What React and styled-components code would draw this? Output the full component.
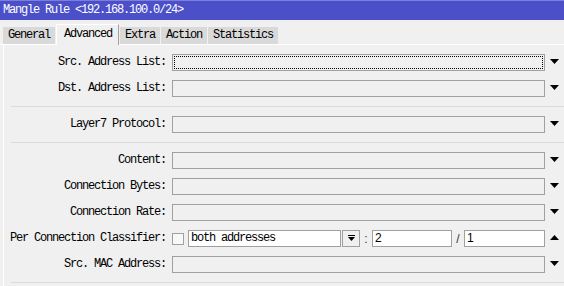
import React from 'react'
import styled, { createGlobalStyle, css } from 'styled-components'

const GlobalStyle = createGlobalStyle`
  html, body {
    margin: 0;
    padding: 0;
    background: #f0f0f0;
    overflow: hidden;
  }
  body {
    font-family: "Liberation Mono", "DejaVu Sans Mono", monospace;
    font-size: 12px;
    letter-spacing: -1.2px;
    color: #000;
  }
`;

const tabs = ['General', 'Advanced', 'Extra', 'Action', 'Statistics'];

function Arrow({ up }) {
  return (
    <svg width="9" height="6" viewBox="0 0 9 6">
      {up
        ? <polygon points="0,5 9,5 4.5,0" fill="#000" />
        : <polygon points="0,0 9,0 4.5,5" fill="#000" />}
    </svg>
  );
}

function FieldRow({ label, focused }) {
  return (
    <Row>
      <Label>{label}</Label>
      <Field focused={focused} />
      <ArrowCell><Arrow /></ArrowCell>
    </Row>
  );
}

export default function App() {
  return (
    <Window>
      <GlobalStyle />
      <TitleBar>Mangle Rule &lt;192.168.100.0/24&gt;</TitleBar>

      <TabStrip>
        {tabs.map(t => (
          <Tab key={t} active={t === 'Advanced'}>{t}</Tab>
        ))}
      </TabStrip>

      <Panel>
        <FieldRow label="Src. Address List:" focused />
        <FieldRow label="Dst. Address List:" />
        <Separator />
        <FieldRow label="Layer7 Protocol:" />
        <Separator />
        <FieldRow label="Content:" />
        <FieldRow label="Connection Bytes:" />
        <FieldRow label="Connection Rate:" />

        <Row>
          <Label>Per Connection Classifier:</Label>
          <Combo>
            <Checkbox />
            <Select>both addresses</Select>
            <DropButton>
              <svg width="9" height="9" viewBox="0 0 9 9">
                <rect x="1" y="1" width="7" height="1" fill="#000" />
                <polygon points="1,3 8,3 4.5,7" fill="#000" />
              </svg>
            </DropButton>
            <Sep>:</Sep>
            <NumInput w={80}>2</NumInput>
            <Sep>/</Sep>
            <NumInput w={81}>1</NumInput>
          </Combo>
          <ArrowCell><Arrow up /></ArrowCell>
        </Row>

        <FieldRow label="Src. MAC Address:" />
        <Separator />
      </Panel>
    </Window>
  );
}

const Window = styled.div`
  width: 564px;
  height: 286px;
  display: flex;
  flex-direction: column;
  background: #f0f0f0;
  overflow: hidden;
`;

const TitleBar = styled.div`
  flex: none;
  height: 20px;
  box-sizing: border-box;
  background: #4b50c9;
  border-top: 1px solid #7b7fd9;
  color: #fff;
  padding-left: 3px;
  line-height: 18px;
  white-space: nowrap;
`;

const TabStrip = styled.div`
  flex: none;
  height: 25px;
  box-sizing: border-box;
  display: flex;
  align-items: flex-end;
  padding-left: 3px;
  border-bottom: 1px solid #fff;
`;

const Tab = styled.div`
  height: 17px;
  line-height: 17px;
  padding: 0 5px;
  margin-right: 1px;
  background: #d9d9d9;
  white-space: nowrap;

  ${p => p.active && css`
    height: 21px;
    line-height: 18px;
    padding: 0 7px;
    margin: 0 1px -1px 0;
    background: #f0f0f0;
    border-top: 1px solid #fff;
    border-left: 1px solid #fff;
    border-right: 1px solid #a0a0a0;
    box-sizing: border-box;
    width: 63px;
  `}
`;

const Panel = styled.div`
  flex: 1;
  margin-left: 3px;
  border-left: 1px solid #fff;
  padding-top: 5px;
  display: flex;
  flex-direction: column;
`;

const Row = styled.div`
  flex: none;
  height: 26px;
  box-sizing: border-box;
  padding-top: 4px;
  display: grid;
  grid-template-columns: 168px 373px 19px;
  align-items: start;
`;

const Label = styled.div`
  text-align: right;
  padding-right: 6px;
  line-height: 17px;
  white-space: nowrap;
`;

const Field = styled.div`
  position: relative;
  height: 17px;
  box-sizing: border-box;
  border: 1px solid #a0a0a0;
  background: #f0f0f0;

  ${p => p.focused && css`
    &::after {
      content: '';
      position: absolute;
      inset: 1px;
      border: 1px dotted #000;
    }
  `}
`;

const ArrowCell = styled.div`
  height: 17px;
  display: flex;
  align-items: center;
  justify-content: center;
  padding-bottom: 1px;
  box-sizing: border-box;
`;

const Separator = styled.div`
  flex: none;
  margin: 4px 0 5px 7px;
  height: 0;
  border-top: 1px solid #dcdcdc;
`;

const Combo = styled.div`
  display: flex;
  align-items: center;
  height: 17px;
`;

const Checkbox = styled.div`
  width: 12px;
  height: 12px;
  flex: none;
  border: 1px solid #a0a0a0;
  background: #f8f8f8;
  box-sizing: border-box;
  margin-right: 4px;
`;

const Select = styled.div`
  width: 153px;
  flex: none;
  height: 17px;
  box-sizing: border-box;
  border: 1px solid #a0a0a0;
  background: #fff;
  padding-left: 2px;
  line-height: 15px;
  white-space: nowrap;
  margin-right: 1px;
`;

const DropButton = styled.div`
  width: 18px;
  height: 17px;
  flex: none;
  box-sizing: border-box;
  border: 1px solid #a0a0a0;
  background: #f0f0f0;
  display: flex;
  align-items: center;
  justify-content: center;
`;

const Sep = styled.div`
  width: 12px;
  flex: none;
  text-align: center;
  font-family: "Liberation Sans", Arial, sans-serif;
  letter-spacing: 0;
  color: #333;
`;

const NumInput = styled.div`
  width: ${p => p.w}px;
  flex: none;
  height: 17px;
  box-sizing: border-box;
  border: 1px solid #a0a0a0;
  background: #fff;
  padding-left: 2px;
  font-family: "Liberation Sans", Arial, sans-serif;
  letter-spacing: 0;
  line-height: 15px;
`;
